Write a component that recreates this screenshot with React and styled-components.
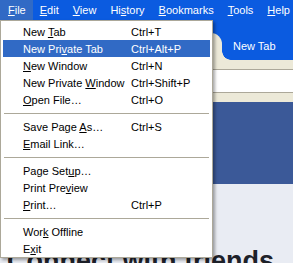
import React from 'react';
import styled, { createGlobalStyle } from 'styled-components';

const GlobalStyle = createGlobalStyle`
  html, body {
    margin: 0;
    padding: 0;
    overflow: hidden;
  }
  body {
    font-family: "Liberation Sans", Arial, sans-serif;
  }
`;

const Window = styled.div`
  position: relative;
  width: 293px;
  height: 263px;
  overflow: hidden;
  background: #e9ecf3;
`;

const MenuBar = styled.div`
  display: flex;
  height: 20px;
  background: #0b5be0;
  font-size: 11px;
  line-height: 20px;
  color: #fff;
`;

const MenuTitle = styled.div`
  padding: 0 7px;
  background: ${p => (p.open ? '#316ac5' : 'transparent')};
  white-space: nowrap;
  &:first-child {
    padding-left: 8px;
  }
`;

const Key = styled.span`
  text-decoration: underline;
  text-underline-offset: 1px;
`;

const TabStrip = styled.div`
  display: flex;
  align-items: flex-end;
  height: 40px;
  background: #0b5be0;
`;

const ActiveTab = styled.div`
  position: relative;
  flex-shrink: 0;
  width: 222px;
  height: 27px;
  background: #ece9d8;
  border-top-right-radius: 11px;
  &::after {
    content: '';
    position: absolute;
    right: -9px;
    bottom: 0;
    width: 9px;
    height: 9px;
    background: radial-gradient(circle at 100% 0, transparent 8.5px, #ece9d8 9px);
  }
`;

const TabLabel = styled.div`
  align-self: flex-start;
  margin: 20px 0 0 11px;
  font-size: 11px;
  line-height: 13px;
  color: #fff;
  white-space: nowrap;
`;

const Toolbar = styled.div`
  height: 9px;
  background: #ece9d8;
  border-bottom: 1px solid #aca899;
`;

const AddressArea = styled.div`
  height: 22px;
  background: #fff;
  border-bottom: 1px solid #aca899;
`;

const Bookmarks = styled.div`
  height: 9px;
  background: #ece9d8;
`;

const SiteHeader = styled.div`
  height: 82px;
  background: #3b5998;
`;

const SiteBody = styled.div`
  padding: 64px 0 0 7px;
`;

const Heading = styled.h1`
  margin: 0;
  font-size: 27px;
  line-height: 27px;
  font-weight: bold;
  color: #1d2129;
  white-space: nowrap;
`;

const Dropdown = styled.div`
  position: absolute;
  top: 20px;
  left: 0;
  width: 213px;
  box-sizing: border-box;
  padding: 2px 2px 0;
  background: #fff;
  border: 1px solid #aca899;
  box-shadow: 2px 2px 3px rgba(0, 0, 0, 0.35);
  font-size: 11px;
  color: #000;
`;

const Item = styled.div`
  display: grid;
  grid-template-columns: 108px 1fr;
  align-items: center;
  height: 17px;
  padding-left: 20px;
  background: ${p => (p.active ? '#316ac5' : 'transparent')};
  color: ${p => (p.active ? '#fff' : '#000')};
  white-space: nowrap;
`;

const Separator = styled.div`
  height: 1px;
  margin: 5px 1px 4px;
  background: #aca899;
`;

const menus = [
  ['File', 0],
  ['Edit', 0],
  ['View', 0],
  ['History', 2],
  ['Bookmarks', 0],
  ['Tools', 0],
  ['Help', 0],
];

const fileItems = [
  { label: 'New Tab', key: 4, shortcut: 'Ctrl+T' },
  { label: 'New Private Tab', key: 7, shortcut: 'Ctrl+Alt+P', active: true },
  { label: 'New Window', key: 0, shortcut: 'Ctrl+N' },
  { label: 'New Private Window', key: 12, shortcut: 'Ctrl+Shift+P' },
  { label: 'Open File\u2026', key: 0, shortcut: 'Ctrl+O' },
  'sep',
  { label: 'Save Page As\u2026', key: 10, shortcut: 'Ctrl+S' },
  { label: 'Email Link\u2026', key: 0 },
  'sep',
  { label: 'Page Setup\u2026', key: 8 },
  { label: 'Print Preview', key: 9 },
  { label: 'Print\u2026', key: 0, shortcut: 'Ctrl+P' },
  'sep',
  { label: 'Work Offline', key: 3 },
  { label: 'Exit', key: 1 },
];

function Mnemonic({ text, at }) {
  return (
    <>
      {text.slice(0, at)}
      <Key>{text[at]}</Key>
      {text.slice(at + 1)}
    </>
  );
}

export default function App() {
  return (
    <Window>
      <GlobalStyle />
      <MenuBar>
        {menus.map(([name, at], i) => (
          <MenuTitle key={name} open={i === 0}>
            <Mnemonic text={name} at={at} />
          </MenuTitle>
        ))}
      </MenuBar>
      <TabStrip>
        <ActiveTab />
        <TabLabel>New Tab</TabLabel>
      </TabStrip>
      <Toolbar />
      <AddressArea />
      <Bookmarks />
      <SiteHeader />
      <SiteBody>
        <Heading>Connect with friends</Heading>
      </SiteBody>

      <Dropdown>
        {fileItems.map((item, i) =>
          item === 'sep' ? (
            <Separator key={i} />
          ) : (
            <Item key={item.label} active={item.active}>
              <span>
                <Mnemonic text={item.label} at={item.key} />
              </span>
              <span>{item.shortcut}</span>
            </Item>
          )
        )}
      </Dropdown>
    </Window>
  );
}
